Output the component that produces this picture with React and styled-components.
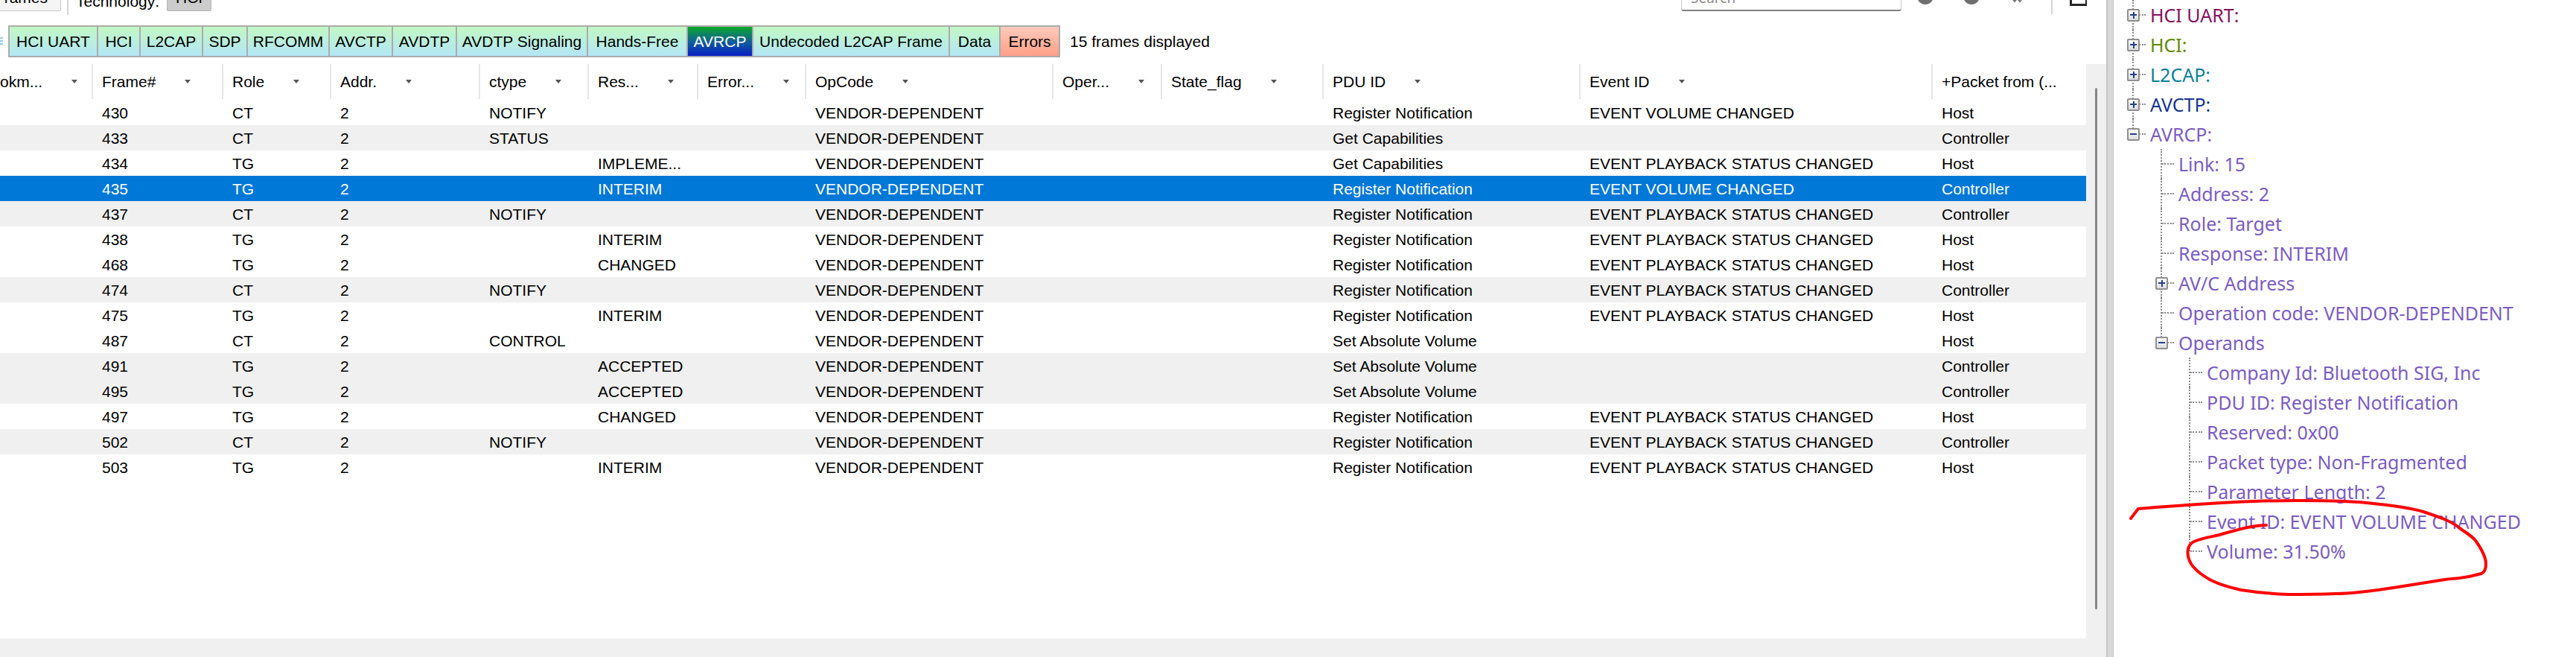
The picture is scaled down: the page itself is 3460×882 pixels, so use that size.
import React from 'react';
import styled, { createGlobalStyle } from 'styled-components';

const Global = createGlobalStyle`
  html, body { margin: 0; padding: 0; background: #fff; }
  body { width: 3460px; height: 882px; overflow: hidden; }
  #root { width: 3460px; height: 882px; }
`;

const UI_FONT = `"Liberation Sans", Arial, sans-serif`;
const TREE_FONT = `"Noto Sans", "Open Sans", sans-serif`;

const Shell = styled.div`
  display: flex;
  width: 3460px;
  height: 882px;
  overflow: hidden;
  background: #fff;
`;

const MainPane = styled.div`
  flex: none;
  width: 2829px;
  height: 882px;
  display: flex;
  flex-direction: column;
  font-family: ${UI_FONT};
  font-size: 21px;
  color: #000;
`;

/* ---------- top toolbar (cut off by the top edge) ---------- */
const TopBar = styled.div`
  flex: none;
  height: 20px;
  display: flex;
  align-items: flex-end;
  overflow: hidden;
`;

const ToolButton = styled.div`
  flex: none;
  box-sizing: border-box;
  width: ${p => p.$w}px;
  height: 36px;
  margin-bottom: 5px;
  margin-left: ${p => p.$ml || 0}px;
  display: flex;
  align-items: center;
  justify-content: ${p => (p.$right ? 'flex-end' : 'center')};
  padding-right: ${p => (p.$right ? 17 : 0)}px;
  background: ${p => (p.$active ? '#cccccc' : '#f5f5f5')};
  border: 1px solid ${p => (p.$active ? '#b3b3b3' : '#c6c6c6')};
  border-radius: 2px;
`;

const ToolSep = styled.div`
  flex: none;
  width: 2px;
  height: 20px;
  margin-left: ${p => p.$ml || 0}px;
  margin-bottom: ${p => p.$mb || 0}px;
  background: #d6d6d6;
`;

const ToolLabel = styled.div`
  flex: none;
  margin-left: 10px;
  margin-bottom: 6px;
  line-height: 24px;
`;

const Spacer = styled.div`
  flex: 1;
`;

const SearchBox = styled.div`
  flex: none;
  box-sizing: border-box;
  width: 296px;
  height: 36px;
  margin-bottom: 5px;
  padding: 0 10px 0 12px;
  display: flex;
  align-items: center;
  justify-content: space-between;
  background: #fff;
  border: 1px solid #c9c9c9;
  border-bottom: 2px solid #808080;
  border-radius: 3px;
  color: #8a8a8a;
  font-family: ${TREE_FONT};
  font-size: 19px;
`;

const SmallCaret = styled.span`
  width: 0;
  height: 0;
  border-left: 4px solid transparent;
  border-right: 4px solid transparent;
  border-top: 5px solid #444;
`;

const RoundIcon = styled.div`
  flex: none;
  width: 22px;
  height: 22px;
  margin-left: ${p => p.$ml}px;
  margin-bottom: 14px;
  border-radius: 50%;
  background: #6f6f6f;
`;

const ChevronIcon = styled.svg`
  flex: none;
  margin-left: 41px;
  margin-bottom: 15px;
`;

const WindowIcon = styled.div`
  flex: none;
  box-sizing: border-box;
  width: 23px;
  height: 22px;
  margin-left: 23px;
  margin-right: 26px;
  margin-bottom: 12px;
  border: 3px solid #262626;
  border-top-width: 2px;
  border-right-width: 2px;
`;

/* ---------- protocol filter bar ---------- */
const FilterBar = styled.div`
  flex: none;
  height: 43px;
  margin-top: 14px;
  display: flex;
  align-items: center;
`;

const Grip = styled.div`
  flex: none;
  width: 4px;
  height: 12px;
  margin-right: 7px;
  background: repeating-linear-gradient(#8fcdf2 0 2px, transparent 2px 4px);
`;

const TabStrip = styled.div`
  flex: none;
  display: flex;
  height: 43px;
  box-sizing: border-box;
  border: 2px solid #ababab;
  border-right: none;
`;

const Tab = styled.div`
  flex: none;
  box-sizing: border-box;
  width: ${p => p.$w}px;
  height: 100%;
  border-right: 2px solid #ababab;
  display: flex;
  align-items: center;
  justify-content: center;
  white-space: nowrap;
  color: ${p => (p.$kind === 'active' ? '#fff' : '#000')};
  background: ${p =>
    p.$kind === 'active'
      ? 'linear-gradient(#0aa82a, #0f5aa0 55%, #0a1fc2)'
      : p.$kind === 'error'
      ? 'linear-gradient(#ffcabb, #ff9f88)'
      : 'linear-gradient(#c2f8c4, #b3e6f6)'};
`;

const FrameCount = styled.div`
  margin-left: 13px;
  white-space: nowrap;
`;

/* ---------- packet table ---------- */
const TableFrame = styled.div`
  flex: 1;
  min-height: 0;
  display: grid;
  grid-template-columns: 2802px 27px;
  grid-template-rows: 1fr 25px;
`;

const TableViewport = styled.div`
  overflow: hidden;
  background: #fff;
`;

const VScroll = styled.div`
  margin-top: 9px;
  background: #f0f0f0;
  display: flex;
  flex-direction: column;
  align-items: flex-start;
  padding-top: 32px;
`;

const Thumb = styled.div`
  width: 3px;
  height: 700px;
  margin-left: 12px;
  border-radius: 2px;
  background: #878787;
`;

const HScroll = styled.div`
  grid-column: 1 / -1;
  background: #f0f0f0;
`;

const HeaderRow = styled.div`
  display: grid;
  grid-template-columns: ${p => p.$cols};
  height: 57px;
  padding-top: 9px;
  box-sizing: border-box;
`;

const HeaderCell = styled.div`
  display: flex;
  align-items: center;
  height: 47px;
  box-sizing: border-box;
  padding-left: ${p => (p.$first ? 0 : 12)}px;
  border-left: ${p => (p.$first ? 'none' : '2px solid #e6e6e6')};
  white-space: nowrap;
  overflow: hidden;
`;

const HeaderCaret = styled.span`
  flex: none;
  margin-left: 39px;
  width: 0;
  height: 0;
  border-left: 4.5px solid transparent;
  border-right: 4.5px solid transparent;
  border-top: 5px solid #555;
`;

const Row = styled.div`
  display: grid;
  grid-template-columns: ${p => p.$cols};
  height: 34px;
  align-items: center;
  background: ${p => (p.$selected ? '#0078d7' : p.$shade ? '#f0f0f0' : '#fff')};
  color: ${p => (p.$selected ? '#fff' : '#000')};
`;

const Cell = styled.div`
  padding-left: 14px;
  white-space: nowrap;
  overflow: hidden;
  padding-top: 1px;
`;

/* ---------- splitter & decode tree ---------- */
const Splitter = styled.div`
  flex: none;
  width: 10px;
  box-sizing: border-box;
  background: #d9d9d9;
  border-left: 2px solid #c4c4c4;
  border-right: 1px solid #c8c8c8;
`;

const TreePane = styled.div`
  flex: 1;
  position: relative;
  overflow: hidden;
  background: #fff;
  font-family: ${TREE_FONT};
  font-size: 25px;
`;

const TreeRow = styled.div`
  display: flex;
  align-items: center;
  height: 40px;
  padding-left: 7px;
`;

const Guide = styled.span`
  flex: none;
  position: relative;
  width: 38px;
  height: 100%;
  display: flex;
  align-items: center;
  &::before {
    content: '';
    display: ${p => (p.$up || p.$down ? 'block' : 'none')};
    position: absolute;
    left: 18px;
    top: ${p => (p.$up ? '0' : '50%')};
    bottom: ${p => (p.$down ? '0' : '50%')};
    border-left: 2px dotted #8c8c8c;
  }
  &::after {
    content: '';
    display: ${p => (p.$hz ? 'block' : 'none')};
    position: absolute;
    left: 20px;
    right: 2px;
    top: calc(50% - 1px);
    border-top: 2px dotted #8c8c8c;
  }
`;

const Expander = styled.span`
  position: relative;
  z-index: 1;
  box-sizing: border-box;
  width: 17px;
  height: 17px;
  margin-left: 11px;
  border: 2px solid #8f8f8f;
  border-radius: 2px;
  background: linear-gradient(#ffffff, #dcdcdc);
  display: flex;
  align-items: center;
  justify-content: center;
`;

const Bar = styled.span`
  position: absolute;
  background: #233f8f;
  width: ${p => (p.$v ? 2 : 9)}px;
  height: ${p => (p.$v ? 9 : 2)}px;
`;

const TreeText = styled.span`
  margin-left: 4px;
  white-space: nowrap;
  color: ${p => p.$color};
`;

const Annotation = styled.svg`
  position: absolute;
  left: 0;
  top: 0;
  pointer-events: none;
`;

/* ---------- data ---------- */
const tabs = [
  ['HCI UART', 119], ['HCI', 57], ['L2CAP', 84], ['SDP', 60], ['RFCOMM', 110],
  ['AVCTP', 85], ['AVDTP', 86], ['AVDTP Signaling', 176], ['Hands-Free', 134],
  ['AVRCP', 88, 'active'], ['Undecoded L2CAP Frame', 264], ['Data', 68], ['Errors', 80, 'error'],
];

const columns = [
  ['okm...', 123], ['Frame#', 175], ['Role', 145], ['Addr.', 200], ['ctype', 146],
  ['Res...', 147], ['Error...', 145], ['OpCode', 332], ['Oper...', 146],
  ['State_flag', 217], ['PDU ID', 345], ['Event ID', 473], ['+Packet from (...', 208, true],
];
const gridCols = columns.map(c => `${c[1]}px`).join(' ');

const RN = 'Register Notification';
const PB = 'EVENT PLAYBACK STATUS CHANGED';
const VD = 'VENDOR-DEPENDENT';
const frames = [
  ['430', 'CT', 'NOTIFY', '', RN, 'EVENT VOLUME CHANGED', 'Host'],
  ['433', 'CT', 'STATUS', '', 'Get Capabilities', '', 'Controller'],
  ['434', 'TG', '', 'IMPLEME...', 'Get Capabilities', PB, 'Host'],
  ['435', 'TG', '', 'INTERIM', RN, 'EVENT VOLUME CHANGED', 'Controller', true],
  ['437', 'CT', 'NOTIFY', '', RN, PB, 'Controller'],
  ['438', 'TG', '', 'INTERIM', RN, PB, 'Host'],
  ['468', 'TG', '', 'CHANGED', RN, PB, 'Host'],
  ['474', 'CT', 'NOTIFY', '', RN, PB, 'Controller'],
  ['475', 'TG', '', 'INTERIM', RN, PB, 'Host'],
  ['487', 'CT', 'CONTROL', '', 'Set Absolute Volume', '', 'Host'],
  ['491', 'TG', '', 'ACCEPTED', 'Set Absolute Volume', '', 'Controller'],
  ['495', 'TG', '', 'ACCEPTED', 'Set Absolute Volume', '', 'Controller'],
  ['497', 'TG', '', 'CHANGED', RN, PB, 'Host'],
  ['502', 'CT', 'NOTIFY', '', RN, PB, 'Controller'],
  ['503', 'TG', '', 'INTERIM', RN, PB, 'Host'],
];

const AV = '#7a5cc2';
// [label, depth, expander, hasNextSibling, color]
const tree = [
  ['HCI UART:', 0, '+', true, '#86115f'],
  ['HCI:', 0, '+', true, '#5f8a00'],
  ['L2CAP:', 0, '+', true, '#0a7f98'],
  ['AVCTP:', 0, '+', true, '#12348f'],
  ['AVRCP:', 0, '-', false, AV],
  ['Link: 15', 1, null, true, AV],
  ['Address: 2', 1, null, true, AV],
  ['Role: Target', 1, null, true, AV],
  ['Response: INTERIM', 1, null, true, AV],
  ['AV/C Address', 1, '+', true, AV],
  ['Operation code: VENDOR-DEPENDENT', 1, null, true, AV],
  ['Operands', 1, '-', false, AV],
  ['Company Id: Bluetooth SIG, Inc', 2, null, true, AV],
  ['PDU ID: Register Notification', 2, null, true, AV],
  ['Reserved: 0x00', 2, null, true, AV],
  ['Packet type: Non-Fragmented', 2, null, true, AV],
  ['Parameter Length: 2', 2, null, true, AV],
  ['Event ID: EVENT VOLUME CHANGED', 2, null, true, AV],
  ['Volume: 31.50%', 2, null, false, AV],
];

function ExpanderBox({ kind }) {
  return (
    <Expander>
      <Bar />
      {kind === '+' && <Bar $v />}
    </Expander>
  );
}

function TreeLine({ label, depth, exp, next, color }) {
  const guides = [];
  for (let d = 0; d < depth; d++) guides.push(<Guide key={d} />);
  return (
    <TreeRow>
      {guides}
      <Guide $up $down={next} $hz>
        {exp && <ExpanderBox kind={exp} />}
      </Guide>
      <TreeText $color={color}>{label}</TreeText>
    </TreeRow>
  );
}

export default function App() {
  return (
    <>
      <Global />
      <Shell>
        <MainPane>
          <TopBar>
            <ToolButton $w={84} $ml={-2} $right>Frames</ToolButton>
            <ToolSep $ml={8} />
            <ToolLabel>Technology:</ToolLabel>
            <ToolButton $w={60} $ml={10} $active>HCI</ToolButton>
            <Spacer />
            <SearchBox>
              <span>Search</span>
              <SmallCaret />
            </SearchBox>
            <RoundIcon $ml={21} />
            <RoundIcon $ml={40} />
            <ChevronIcon width="18" height="8" viewBox="0 0 18 8">
              <path d="M2 0 L6 5 L10 0 M9 0 L13 5 L17 0" stroke="#777" strokeWidth="2" fill="none" />
            </ChevronIcon>
            <ToolSep $ml={37} $mb={1} />
            <WindowIcon />
          </TopBar>

          <FilterBar>
            <Grip />
            <TabStrip>
              {tabs.map(([name, w, kind]) => (
                <Tab key={name} $w={w} $kind={kind}>{name}</Tab>
              ))}
            </TabStrip>
            <FrameCount>15 frames displayed</FrameCount>
          </FilterBar>

          <TableFrame>
            <TableViewport>
              <HeaderRow $cols={gridCols}>
                {columns.map(([title, , noArrow], i) => (
                  <HeaderCell key={title} $first={i === 0}>
                    {title}
                    {!noArrow && <HeaderCaret />}
                  </HeaderCell>
                ))}
              </HeaderRow>
              {frames.map(([num, role, ctype, res, pdu, ev, from, sel]) => (
                <Row key={num} $cols={gridCols} $selected={sel} $shade={from === 'Controller'}>
                  <Cell />
                  <Cell>{num}</Cell>
                  <Cell>{role}</Cell>
                  <Cell>2</Cell>
                  <Cell>{ctype}</Cell>
                  <Cell>{res}</Cell>
                  <Cell />
                  <Cell>{VD}</Cell>
                  <Cell />
                  <Cell />
                  <Cell>{pdu}</Cell>
                  <Cell>{ev}</Cell>
                  <Cell>{from}</Cell>
                </Row>
              ))}
            </TableViewport>
            <VScroll>
              <Thumb />
            </VScroll>
            <HScroll />
          </TableFrame>
        </MainPane>

        <Splitter />

        <TreePane>
          {tree.map(([label, depth, exp, next, color]) => (
            <TreeLine key={label} label={label} depth={depth} exp={exp} next={next} color={color} />
          ))}
          <Annotation width="621" height="882" viewBox="0 0 621 882">
            <path
              d="M23,696 L33,683 C120,676 200,671 256,672 C300,672 320,673 340,675 C380,679 400,682 416,687 C440,695 455,700 466,710 C478,718 484,722 487,727 C496,740 500,750 500,757 C500,764 498,768 494,770 C470,777 460,776 445,778 C420,782 400,785 382,788 C350,793 320,797 298,797 C270,798 250,798 235,798 C210,797 190,795 171,792 C150,787 140,784 129,778 C115,770 108,763 104,757 C100,750 99,742 100,737 C101,732 104,729 108,727 C120,722 130,721 142,718 C160,713 170,710 180,708 C190,706 198,705 205,705"
              fill="none"
              stroke="#ff0000"
              strokeWidth="4"
              strokeLinecap="round"
              strokeLinejoin="round"
            />
          </Annotation>
        </TreePane>
      </Shell>
    </>
  );
}
